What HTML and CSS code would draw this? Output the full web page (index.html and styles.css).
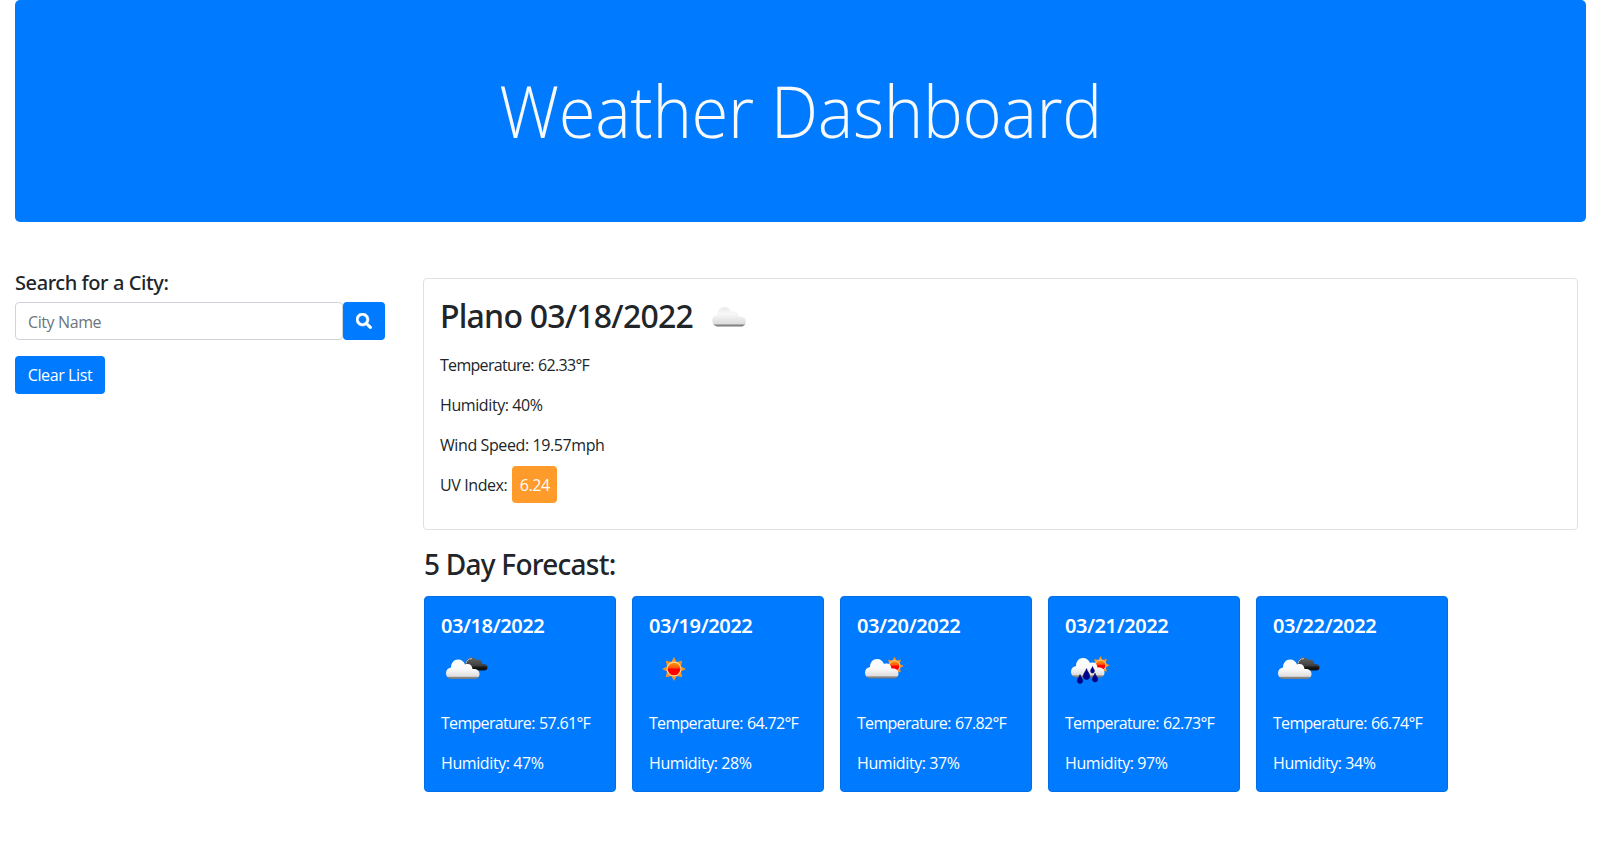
FILE: index.html
```html
<!DOCTYPE html>
<html lang="en">
<head>
<meta charset="utf-8">
<title>Weather Dashboard</title>
<link rel="stylesheet" href="styles.css">
</head>
<body>
<svg class="defs" width="0" height="0" aria-hidden="true">
  <defs>
    <linearGradient id="white" x1="0" y1="0" x2="0" y2="1">
      <stop offset="0" stop-color="#fff"/><stop offset=".5" stop-color="#fafafa"/><stop offset=".86" stop-color="#dedede"/><stop offset=".92" stop-color="#888"/><stop offset="1" stop-color="#777"/>
    </linearGradient>
    <linearGradient id="pale" x1="0" y1="0" x2="0" y2="1">
      <stop offset="0" stop-color="#e9e9e9"/><stop offset=".35" stop-color="#f8f8f8"/><stop offset=".86" stop-color="#dcdcdc"/><stop offset=".93" stop-color="#858585"/><stop offset="1" stop-color="#777"/>
    </linearGradient>
    <linearGradient id="dark" x1="0" y1="0" x2="0" y2="1">
      <stop offset="0" stop-color="#666"/><stop offset=".6" stop-color="#404040"/><stop offset=".8" stop-color="#111"/><stop offset="1" stop-color="#111"/>
    </linearGradient>
    <linearGradient id="core" x1="0" y1="0" x2="0" y2="1">
      <stop offset="0" stop-color="#ffa000"/><stop offset=".4" stop-color="#ff5a10"/><stop offset=".52" stop-color="#f00"/><stop offset="1" stop-color="#f00"/>
    </linearGradient>
    <path id="cloud" d="M6 19.500C2.500 19.500 0 17 0 13.700C0 10.500 2 8.500 5 8C5 3.500 8 0 12 0C15.500 0 18 2 19 5C23 3.500 26.300 5.500 26.500 9.500C30.500 9 33.500 11 33.500 14.500C33.500 17.500 31.500 19.500 28.500 19.500Z"/>
    <g id="sun">
      <path fill="#f7941d" d="M0-12L2.600-7L8.200-8.200L7-2.600L12 0L7 2.600L8.200 8.200L2.600 7L0 12L-2.600 7L-8.200 8.200L-7 2.600L-12 0L-7-2.600L-8.200-8.200L-2.600-7Z"/>
      <circle r="6.900" fill="url(#core)" stroke="#ffd9a0" stroke-width="1.100"/>
    </g>
    <path id="drop" d="M0-4.500C.5-2 2.700-.5 2.700 1.800C2.700 3.500 1.500 4.500 0 4.500S-2.700 3.500-2.700 1.800C-2.700-.5-.5-2 0-4.500Z" fill="#00008f" stroke="#000050" stroke-width=".5"/>
    <symbol id="broken" viewBox="0 0 50 50">
      <g transform="translate(25 13.500)"><path fill="url(#dark)" d="M3 13C0 13-1 10-.5 7C-.5 3 2 0 5.500 0C8 0 10 1 10.800 2.500C14 1.500 16 3.500 16.500 6.500C19.500 6 21.500 7.500 21.500 9.700C21.500 12 20 13 18 13Z"/><path d="M0 6C.5 3 2.500 1 6 1" fill="none" stroke="#bbb" stroke-width="1"/></g>
      <use href="#cloud" x="5" y="15.500" fill="url(#white)"/>
    </symbol>
    <symbol id="clear" viewBox="0 0 50 50"><use href="#sun" x="25" y="25"/></symbol>
    <symbol id="few" viewBox="0 0 50 50">
      <use href="#sun" transform="translate(37.500 22) scale(.77)"/>
      <use href="#cloud" x="8" y="15" fill="url(#white)"/>
    </symbol>
    <symbol id="rain" viewBox="0 0 50 50">
      <use href="#sun" transform="translate(35.500 21.300) scale(.77)"/>
      <use href="#cloud" x="6" y="14" fill="url(#white)"/>
      <use href="#drop" x="15" y="35"/><use href="#drop" transform="translate(21.500 30) scale(1.200)"/>
      <use href="#drop" transform="translate(27.500 25.700) scale(.75)"/><use href="#drop" x="30" y="33.500"/>
    </symbol>
    <symbol id="scattered" viewBox="0 0 50 50"><use href="#cloud" x="8.300" y="12" fill="url(#pale)"/></symbol>
  </defs>
</svg>
<header class="jumbotron"><h1>Weather Dashboard</h1></header>
<main class="layout">
  <aside class="search">
    <h5>Search for a City:</h5>
    <form class="search-row">
      <input class="field" type="text" placeholder="City Name" aria-label="City Name">
      <button class="btn search-btn" type="button" aria-label="Search">
        <svg width="16" height="16" viewBox="0 0 512 512"><path fill="#fff" stroke="#fff" stroke-width="16" d="M505 442.700L405.300 343c-4.500-4.500-10.600-7-17-7H372c27.600-35.300 44-79.700 44-128C416 93.100 322.900 0 208 0S0 93.100 0 208s93.100 208 208 208c48.300 0 92.700-16.400 128-44v16.300c0 6.400 2.500 12.500 7 17l99.700 99.700c9.400 9.400 24.600 9.400 33.900 0l28.300-28.300c9.400-9.400 9.400-24.600.1-34zM208 336c-70.700 0-128-57.200-128-128 0-70.700 57.200-128 128-128 70.700 0 128 57.200 128 128 0 70.700-57.200 128-128 128z"/></svg>
      </button>
    </form>
    <button class="btn clear-btn" type="button">Clear List</button>
  </aside>
  <section class="results">
    <article class="current">
      <h2><span>Plano 03/18/2022</span><svg class="icon"><use href="#scattered"/></svg></h2>
      <p class="temp">Temperature: 62.33°F</p>
      <p>Humidity: 40%</p>
      <p>Wind Speed: 19.57mph</p>
      <p>UV Index: <span class="uv">6.24</span></p>
    </article>
    <h3>5 Day Forecast:</h3>
    <div class="forecast">
      <article class="day"><h5>03/18/2022</h5><svg class="icon"><use href="#broken"/></svg><p class="temp">Temperature: 57.61°F</p><p>Humidity: 47%</p></article>
      <article class="day"><h5>03/19/2022</h5><svg class="icon"><use href="#clear"/></svg><p class="temp">Temperature: 64.72°F</p><p>Humidity: 28%</p></article>
      <article class="day"><h5>03/20/2022</h5><svg class="icon"><use href="#few"/></svg><p class="temp">Temperature: 67.82°F</p><p>Humidity: 37%</p></article>
      <article class="day"><h5>03/21/2022</h5><svg class="icon"><use href="#rain"/></svg><p class="temp">Temperature: 62.73°F</p><p>Humidity: 97%</p></article>
      <article class="day"><h5>03/22/2022</h5><svg class="icon"><use href="#broken"/></svg><p class="temp">Temperature: 66.74°F</p><p>Humidity: 34%</p></article>
    </div>
  </section>
</main>
</body>
</html>
```
FILE: styles.css
```css
* { box-sizing: border-box; }
body {
  margin: 0;
  padding: 0 23px 0 15px;
  background: #fff;
  color: #212529;
  font: 400 16px/24px "Open Sans", "Noto Sans", sans-serif;
  letter-spacing: -.4px;
}
.defs { position: absolute; }
h1, h2, h3, h5, p { margin: 0; }
.jumbotron {
  height: 222px;
  border-radius: 5px;
  background: #007bff;
  color: #f8f9fa;
  display: flex;
  justify-content: center;
  padding-top: 67px;
}
h1 { font-weight: 300; font-size: 72px; line-height: 86px; transform: scaleX(.931); white-space: nowrap; }
h2, h3, h5 { font-family: "Noto Sans", "Open Sans", sans-serif; font-weight: 500; }
h5 { font-size: 20px; line-height: 24px; letter-spacing: -.42px; padding-top: 1px; height: 24px; }
.layout { display: flex; justify-content: space-between; padding: 48px 8px 0 0; }
.search { width: 370px; }
.search h5 { margin-bottom: 8px; }
.search-row { display: flex; margin-bottom: 16px; }
.field {
  flex: 1;
  min-width: 0;
  height: 38px;
  padding: 8px 12px 6px;
  border: 1px solid #ced4da;
  border-radius: 4px;
  font: inherit;
  letter-spacing: inherit;
}
.field::placeholder { color: #6c757d; opacity: 1; }
.btn {
  height: 38px;
  border: 0;
  border-radius: 4px;
  background: #007bff;
  color: #fff;
  font: inherit;
  letter-spacing: inherit;
}
.search-btn { width: 42px; padding: 0; display: flex; justify-content: center; padding-top: 11px; }
.clear-btn { width: 90px; padding: 0; }
.results { width: 1155px; padding-top: 8px; }
.current {
  height: 252px;
  padding: 16px;
  border: 1px solid #dee2e6;
  border-radius: 4px;
}
.current h2 { display: flex; gap: 11px; height: 50px; margin-bottom: 8px; font-size: 32px; line-height: 42px; letter-spacing: -.78px; }
.icon { display: block; width: 50px; height: 50px; }
.current p + p { margin-top: 16px; }
.temp { letter-spacing: -.7px; word-spacing: 1px; }
.uv { display: inline-block; height: 37px; margin: -7px 0 -6px 1px; padding: 7px 7.500px 6px; border-radius: 4px; background: #ff9b2b; color: #fff; vertical-align: baseline; }
h3 { margin: 17px 0 15px 1px; font-size: 28px; line-height: 34px; letter-spacing: -.75px; }
.forecast { display: flex; gap: 16px; margin-left: 1px; }
.day {
  width: 192px;
  height: 196px;
  padding: 16px;
  border: 1px solid #0070e8;
  border-radius: 4px;
  background: #007bff;
  color: #fff;
  white-space: nowrap;
}
.day h5 { font-weight: 600; }
.day .icon { margin: 7px 0 17px; }
.day p + p { margin-top: 16px; }
```
